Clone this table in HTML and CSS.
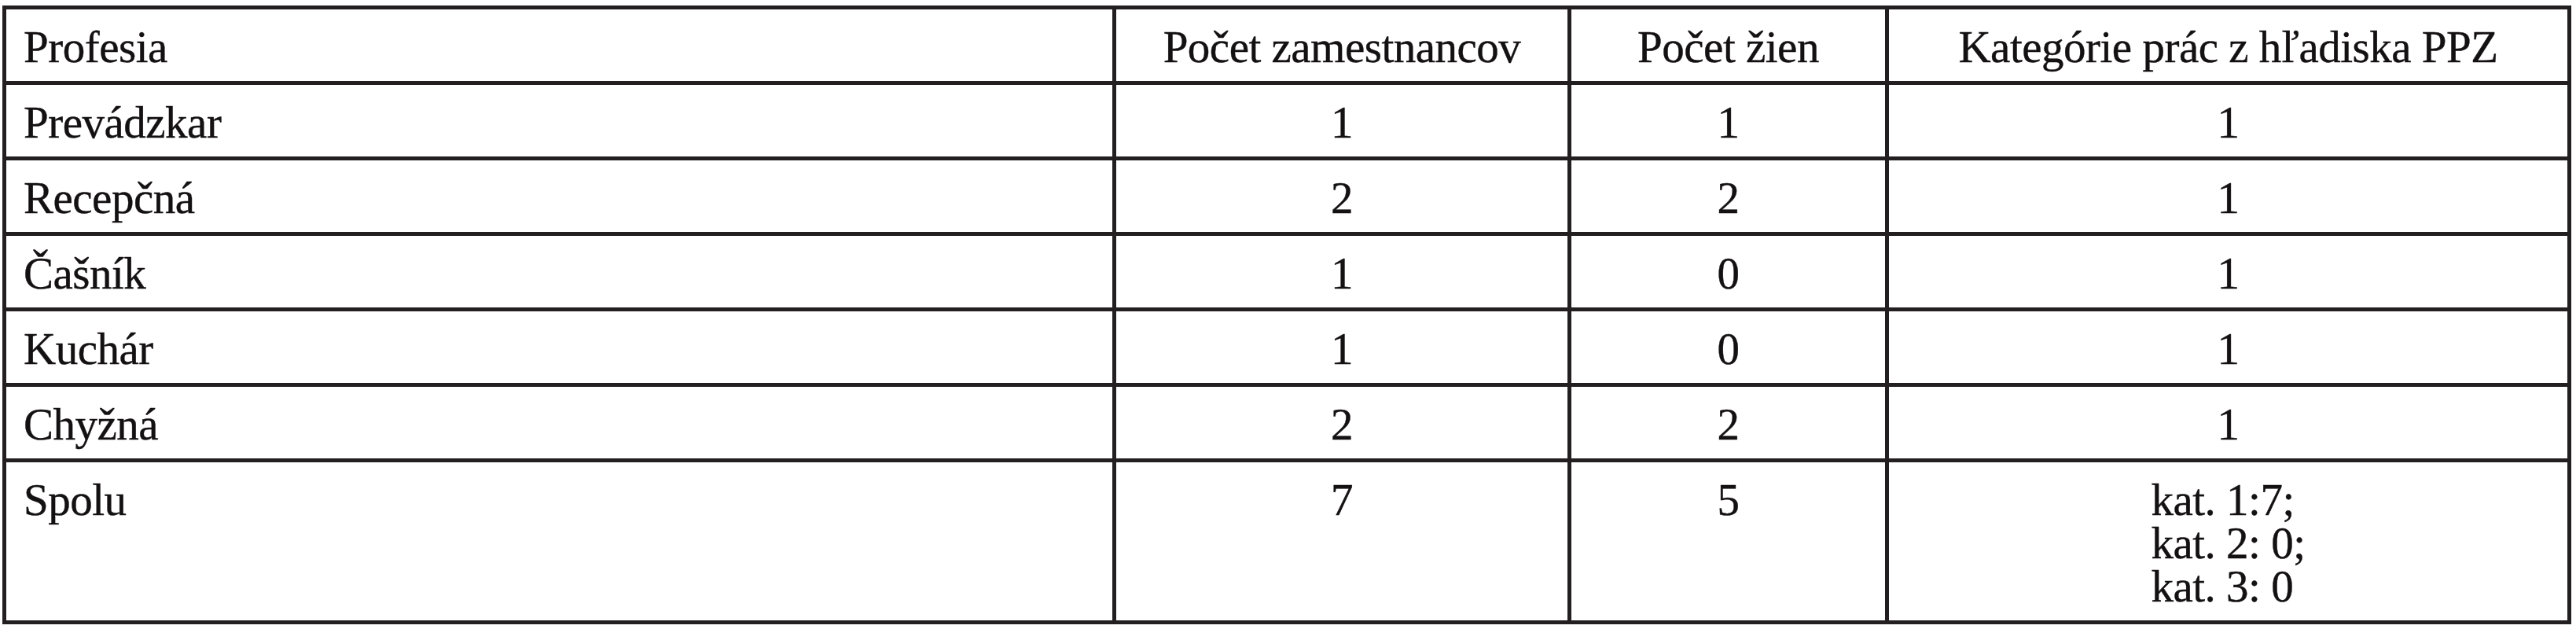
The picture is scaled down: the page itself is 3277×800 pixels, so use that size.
FILE: index.html
```html
<!DOCTYPE html>
<html lang="sk">
<head>
<meta charset="utf-8">
<title>Profesia</title>
<link rel="stylesheet" href="styles.css">
</head>
<body>
<table class="grid">
  <colgroup>
    <col class="c-prof">
    <col class="c-zam">
    <col class="c-zien">
    <col class="c-kat">
  </colgroup>
  <tr>
    <td class="name">Profesia</td>
    <td class="num">Počet zamestnancov</td>
    <td class="num">Počet žien</td>
    <td class="num">Kategórie prác z hľadiska PPZ</td>
  </tr>
  <tr>
    <td class="name">Prevádzkar</td>
    <td class="num">1</td>
    <td class="num">1</td>
    <td class="num">1</td>
  </tr>
  <tr>
    <td class="name">Recepčná</td>
    <td class="num">2</td>
    <td class="num">2</td>
    <td class="num">1</td>
  </tr>
  <tr>
    <td class="name">Čašník</td>
    <td class="num">1</td>
    <td class="num">0</td>
    <td class="num">1</td>
  </tr>
  <tr>
    <td class="name">Kuchár</td>
    <td class="num">1</td>
    <td class="num">0</td>
    <td class="num">1</td>
  </tr>
  <tr>
    <td class="name">Chyžná</td>
    <td class="num">2</td>
    <td class="num">2</td>
    <td class="num">1</td>
  </tr>
  <tr>
    <td class="name">Spolu</td>
    <td class="num">7</td>
    <td class="num">5</td>
    <td class="num"><span class="katlist"><span class="katline">kat. 1:7;</span><span class="katline">kat. 2: 0;</span><span class="katline">kat. 3: 0</span></span></td>
  </tr>
</table>
</body>
</html>
```

FILE: styles.css
```css
html, body {
  margin: 0;
  padding: 0;
  background: #ffffff;
}

body {
  font-family: "Liberation Serif", "Times New Roman", Times, "Nimbus Roman", "DejaVu Serif", serif;
  color: #141112;
}

.grid {
  margin: 7px 0 0 3px;
  width: 3267px;
  table-layout: fixed;
  border-collapse: collapse;
  border: 5px solid #231f20;
  font-size: 57px;
  line-height: 55px;
  letter-spacing: -0.5px;
  -webkit-text-stroke: 0.4px #141112;
}

.c-prof { width: 1412px; }
.c-zam { width: 579px; }
.c-zien { width: 404px; }
.c-kat { width: 868px; }

.grid td {
  border: 5px solid #231f20;
  padding: 20px 0 16px 0;
  vertical-align: top;
  white-space: nowrap;
}

.grid td.name {
  text-align: left;
  padding-left: 22px;
}

.grid td.num {
  text-align: center;
}

.katlist {
  display: inline-flex;
  flex-direction: column;
  text-align: left;
}

.katline {
  display: block;
  height: 55px;
}
```
